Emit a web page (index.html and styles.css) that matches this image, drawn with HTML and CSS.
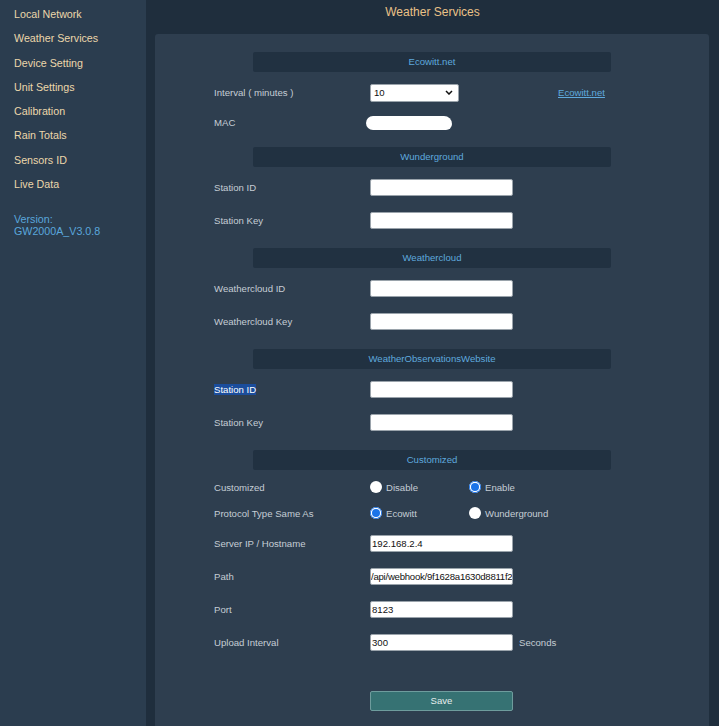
FILE: index.html
```html
<!DOCTYPE html>
<html>
<head>
<meta charset="utf-8">
<link rel="stylesheet" href="styles.css">
</head>
<body>
<div class="app">
  <aside class="sidebar">
    <nav class="nav">
      <a class="nav-item">Local Network</a>
      <a class="nav-item">Weather Services</a>
      <a class="nav-item">Device Setting</a>
      <a class="nav-item">Unit Settings</a>
      <a class="nav-item">Calibration</a>
      <a class="nav-item">Rain Totals</a>
      <a class="nav-item">Sensors ID</a>
      <a class="nav-item">Live Data</a>
    </nav>
    <div class="version">Version:<br>GW2000A_V3.0.8</div>
  </aside>
  <main class="main">
    <h1 class="title">Weather Services</h1>
    <section class="panel">
      <div class="form">
        <div class="section-head">Ecowitt.net</div>
        <div class="row">
          <span class="label">Interval ( minutes )</span>
          <div class="cell"><div class="select"><span>10</span><svg width="8" height="5" viewBox="0 0 8 5"><path d="M1 1 L4 4 L7 1" fill="none" stroke="#111" stroke-width="1.5"/></svg></div></div>
          <a class="link">Ecowitt.net</a>
        </div>
        <div class="row row-mac">
          <span class="label">MAC</span>
          <div class="cell"><div class="mac-blob"></div></div>
        </div>

        <div class="section-head">Wunderground</div>
        <div class="row"><span class="label">Station ID</span><div class="cell"><input class="field" type="text"></div></div>
        <div class="row"><span class="label">Station Key</span><div class="cell"><input class="field" type="text"></div></div>

        <div class="section-head">Weathercloud</div>
        <div class="row"><span class="label">Weathercloud ID</span><div class="cell"><input class="field" type="text"></div></div>
        <div class="row"><span class="label">Weathercloud Key</span><div class="cell"><input class="field" type="text"></div></div>

        <div class="section-head">WeatherObservationsWebsite</div>
        <div class="row"><span class="label"><span class="selected">Station ID</span></span><div class="cell"><input class="field" type="text"></div></div>
        <div class="row"><span class="label">Station Key</span><div class="cell"><input class="field" type="text"></div></div>

        <div class="section-head">Customized</div>
        <div class="row row-radio">
          <span class="label">Customized</span>
          <div class="radios">
            <label class="opt"><span class="radio"></span>Disable</label>
            <label class="opt"><span class="radio checked"></span>Enable</label>
          </div>
        </div>
        <div class="row row-radio">
          <span class="label">Protocol Type Same As</span>
          <div class="radios">
            <label class="opt"><span class="radio checked"></span>Ecowitt</label>
            <label class="opt"><span class="radio"></span>Wunderground</label>
          </div>
        </div>
        <div class="row"><span class="label">Server IP / Hostname</span><div class="cell"><input class="field" type="text" value="192.168.2.4"></div></div>
        <div class="row"><span class="label">Path</span><div class="cell"><input class="field field-tight" type="text" value="/api/webhook/9f1628a1630d8811f2"></div></div>
        <div class="row"><span class="label">Port</span><div class="cell"><input class="field" type="text" value="8123"></div></div>
        <div class="row"><span class="label">Upload Interval</span><div class="cell"><input class="field" type="text" value="300"><span class="unit">Seconds</span></div></div>

        <div class="actions"><button class="save">Save</button></div>
      </div>
    </section>
  </main>
</div>
</body>
</html>
```
FILE: styles.css
```css
* { box-sizing: border-box; }
html, body { margin: 0; padding: 0; height: 100%; }
body {
  background: #1f2e3d;
  font-family: "Liberation Sans", Arial, sans-serif;
  overflow: hidden;
}
.app { display: flex; height: 726px; }
.sidebar {
  width: 146px;
  flex: none;
  background: #2b3d4f;
  padding: 7px 0 0 14px;
}
.nav { display: flex; flex-direction: column; }
.nav-item {
  color: #ecd7ab;
  font-size: 10.7px;
  line-height: 14px;
  height: 24.3px;
}
.version {
  margin-top: 12px;
  color: #5aa7dc;
  font-size: 10.7px;
  line-height: 12px;
}
.main { flex: 1; display: flex; flex-direction: column; }
.title {
  margin: 0;
  height: 34px;
  padding-top: 5px;
  text-align: center;
  font-weight: normal;
  font-size: 12px;
  line-height: 14px;
  color: #eac187;
}
.panel {
  flex: 1;
  margin: 0 10px 0 9px;
  background: #2e3e4f;
  border-radius: 3px 3px 0 0;
  padding-top: 18px;
}
.form { width: 436px; margin: 0 auto; }
.section-head {
  width: 358px;
  height: 20px;
  margin: 11px auto 4px;
  background: #213141;
  border-radius: 2px;
  color: #5fa9de;
  font-size: 9.6px;
  line-height: 20px;
  text-align: center;
}
.form > .section-head:first-child { margin-top: 0; }
.row {
  display: grid;
  grid-template-columns: 156px 188px 1fr;
  align-items: center;
  height: 33px;
}
.row-mac { height: 27px; }
.row-radio { height: 26px; }
.row-radio + .row:not(.row-radio) { margin-top: 1px; }
.label { color: #c5cdd5; font-size: 9.6px; white-space: nowrap; }
.selected { background: #1b4d9c; color: #ffffff; }
.cell { display: flex; align-items: center; gap: 6px; white-space: nowrap; }
.field {
  width: 143px;
  height: 17px;
  border: 1px solid #9aa3ab;
  border-radius: 2px;
  background: #ffffff;
  padding: 0 1px;
  font-family: "Liberation Sans", Arial, sans-serif;
  font-size: 9.6px;
  color: #111;
  outline: none;
}
.field-tight { letter-spacing: -0.25px; padding: 0; }
.unit { color: #c5cdd5; font-size: 9.6px; }
.select {
  width: 89px;
  height: 18px;
  background: #fff;
  border: 1px solid #9aa3ab;
  border-radius: 2px;
  display: flex;
  align-items: center;
  justify-content: space-between;
  padding: 0 5px 0 3px;
  font-size: 9.6px;
  color: #111;
}
.link {
  color: #5fa9de;
  text-decoration: underline;
  font-size: 9.6px;
}
.mac-blob {
  width: 86px;
  height: 14px;
  margin-left: -4px;
  background: #ffffff;
  border-radius: 7px 8px 6px 7px;
}
.radios { grid-column: 2 / 4; display: flex; }
.opt {
  width: 99px;
  display: flex;
  align-items: center;
  gap: 4px;
  color: #c5cdd5;
  font-size: 9.6px;
}
.radio {
  width: 12px;
  height: 12px;
  border-radius: 50%;
  background: #ffffff;
  position: relative;
  flex: none;
}
.radio.checked::after {
  content: "";
  position: absolute;
  left: 2px; top: 2px;
  width: 8px; height: 8px;
  border-radius: 50%;
  background: #1a73e8;
  box-shadow: 0 0 0 1px #ffffff;
}
.radio.checked { box-shadow: inset 0 0 0 1px #1a73e8; }
.actions { padding: 31px 0 0 156px; }
.save {
  width: 143px;
  height: 20px;
  background: #367273;
  border: 1px solid #6e9c9d;
  border-radius: 2px;
  color: #e6eeee;
  font-family: "Liberation Sans", Arial, sans-serif;
  font-size: 9.6px;
  padding: 0;
}
```
